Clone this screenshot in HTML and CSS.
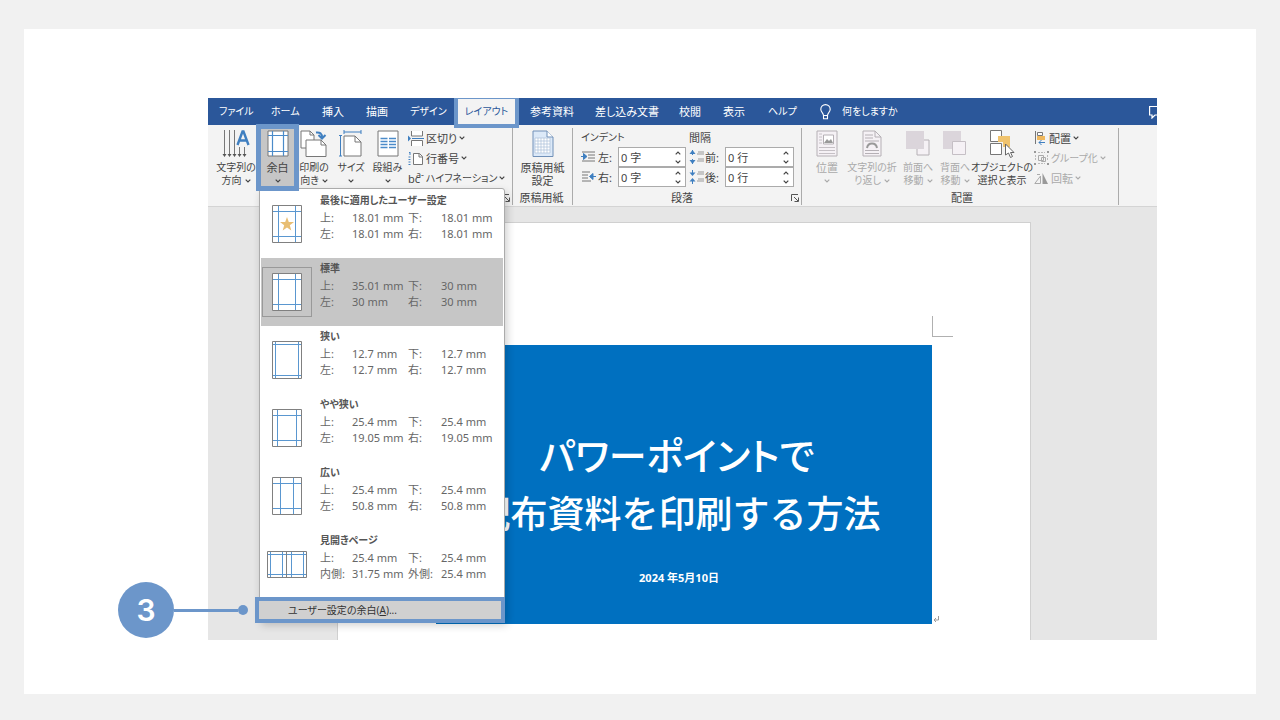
FILE: index.html
```html
<!DOCTYPE html>
<html lang="ja">
<head>
<meta charset="utf-8">
<title>余白の設定</title>
<link rel="stylesheet" href="styles.css">
</head>
<body>
<svg class="defs" aria-hidden="true">
  <symbol id="chev" viewBox="0 0 6 4"><path d="M.7.7 3 3 5.3.7" fill="none" stroke="currentColor" stroke-width="1.2"/></symbol>
  <symbol id="launch" viewBox="0 0 8 8"><path d="M.5 7V.5H7M3 3l4 4M7.500 3.500v4h-4" fill="none" stroke="#555"/></symbol>
</svg>
<main class="slide">
<div class="stage">
<div class="window">
  <nav class="tabs">
    <button class="kana">ファイル</button><button class="kana">ホーム</button><button>挿入</button><button>描画</button><button class="kana">デザイン</button>
    <button class="kana active">レイアウト</button>
    <button class="after">参考資料</button><button>差し込み文書</button><button>校閲</button><button>表示</button><button class="kana">ヘルプ</button>
    <button class="kana tell"><svg width="11" height="16" viewBox="0 0 11 16"><path d="M3.500 11.500C3.500 9 .8 8.200.8 5.300a4.700 4.700 0 0 1 9.400 0c0 2.900-2.700 3.700-2.700 6.200zM3.500 12v2.800h4V12" fill="none" stroke="#fff" stroke-width="1.100"/></svg>何をしますか</button>
    <button class="comment" aria-label="コメント"><svg width="14" height="14" viewBox="0 0 14 14"><path d="M.6 1.500h13v8.500H6L3 13v-3H.6z" fill="none" stroke="#fff" stroke-width="1.200"/></svg></button>
  </nav>
  <div class="ribbon">
    <section class="group setup">
      <div class="tools">
        <button class="big kana"><svg width="28" height="28" viewBox="0 0 28 28"><path d="M2.500 0v26M7.500 0v26M12.500 0v26M17.500 17v9M22.500 17v9" stroke="#777" fill="none"/><path d="M.5 24l2 3 2-3zM5.500 24l2 3 2-3zM10.500 24l2 3 2-3zM15.500 24l2 3 2-3zM20.500 24l2 3 2-3z" fill="#555"/><path d="M15.500 15l5-13.500h1l5 13.500M17.500 10.500h7" fill="none" stroke="#3f7fc0" stroke-width="2.400"/></svg><span>文字列の</span><span>方向 <svg class="c"><use href="#chev"/></svg></span></button>
        <div class="anchor">
          <button class="big pressed"><svg width="22" height="27" viewBox="0 0 22 27"><path d="M1 1h20v25H1z" fill="#fff" stroke="#777"/><path d="M5.500 1v25M16.500 1v25M1 5.500h20M1 21.500h20" stroke="#4b8bc9" stroke-width="1.200"/></svg><span>余白</span><span><svg class="c"><use href="#chev"/></svg></span></button>
          <div class="menu" role="menu">
            <button class="preset" role="menuitem"><span class="thumb"><svg width="30" height="38" viewBox="0 0 30 38"><path class="sheet" d="M.5.500h29v37H.5z"/><path class="guide" d="M6.500 1v36M23.500 1v36M1 6.500h28M1 31.500h28"/><path d="m15 12 1.800 5 5.200.1-4.200 3.200 1.500 5.200-4.300-3-4.300 3 1.500-5.200L8 17.100l5.200-.1z" fill="#e8be73"/></svg></span><strong>最後に適用したユーザー設定</strong><span>上:</span><span>18.01 mm</span><span>下:</span><span>18.01 mm</span><span>左:</span><span>18.01 mm</span><span>右:</span><span>18.01 mm</span></button>
            <button class="preset current" role="menuitem"><span class="thumb"><svg width="30" height="38" viewBox="0 0 30 38"><path class="sheet" d="M.5.500h29v37H.5z"/><path class="guide" d="M6.500 1v36M23.500 1v36M1 6.500h28M1 31.500h28"/></svg></span><strong>標準</strong><span>上:</span><span>35.01 mm</span><span>下:</span><span>30 mm</span><span>左:</span><span>30 mm</span><span>右:</span><span>30 mm</span></button>
            <button class="preset" role="menuitem"><span class="thumb"><svg width="30" height="38" viewBox="0 0 30 38"><path class="sheet" d="M.5.500h29v37H.5z"/><path class="guide" d="M3.500 1v36M26.500 1v36M1 3.500h28M1 34.500h28"/></svg></span><strong>狭い</strong><span>上:</span><span>12.7 mm</span><span>下:</span><span>12.7 mm</span><span>左:</span><span>12.7 mm</span><span>右:</span><span>12.7 mm</span></button>
            <button class="preset" role="menuitem"><span class="thumb"><svg width="30" height="38" viewBox="0 0 30 38"><path class="sheet" d="M.5.500h29v37H.5z"/><path class="guide" d="M5.500 1v36M24.500 1v36M1 6.500h28M1 31.500h28"/></svg></span><strong>やや狭い</strong><span>上:</span><span>25.4 mm</span><span>下:</span><span>25.4 mm</span><span>左:</span><span>19.05 mm</span><span>右:</span><span>19.05 mm</span></button>
            <button class="preset" role="menuitem"><span class="thumb"><svg width="30" height="38" viewBox="0 0 30 38"><path class="sheet" d="M.5.500h29v37H.5z"/><path class="guide" d="M8.500 1v36M21.500 1v36M1 6.500h28M1 31.500h28"/></svg></span><strong>広い</strong><span>上:</span><span>25.4 mm</span><span>下:</span><span>25.4 mm</span><span>左:</span><span>50.8 mm</span><span>右:</span><span>50.8 mm</span></button>
            <button class="preset" role="menuitem"><span class="thumb"><svg width="40" height="27" viewBox="0 0 40 27"><path class="sheet" d="M.5.500h39v26H.5z"/><path class="guide" d="M3.500 1v25M15.500 1v25M24.500 1v25M36.500 1v25M1 3.500h38M1 23.500h38"/><path class="sheet" d="M19.500 .5v26"/></svg></span><strong>見開きページ</strong><span>上:</span><span>25.4 mm</span><span>下:</span><span>25.4 mm</span><span>内側:</span><span>31.75 mm</span><span>外側:</span><span>25.4 mm</span></button>
            <button class="custom kana" role="menuitem">ユーザー設定の余白(<u>A</u>)...</button>
          </div>
        </div>
        <button class="big kana"><svg width="28" height="28" viewBox="0 0 28 28"><path d="M1 1h9l4 4v13H1z" fill="#fff" stroke="#777"/><path d="M10 1v4h4" fill="none" stroke="#777"/><path d="M6 10h15l5 5v11.500H6z" fill="#fff" stroke="#777"/><path d="M21 10v5h5" fill="none" stroke="#777"/><path d="M16 2.500c4-.5 6 1 6 5" fill="none" stroke="#3f7fc0" stroke-width="2"/><path d="m18.500 5 3.500 3.500L25.500 5" fill="none" stroke="#3f7fc0" stroke-width="2"/></svg><span>印刷の</span><span>向き <svg class="c"><use href="#chev"/></svg></span></button>
        <button class="big kana"><svg width="24" height="28" viewBox="0 0 24 28"><path d="M5 6h11l6 6v14H5z" fill="#fff" stroke="#777"/><path d="M16 6v6h6" fill="none" stroke="#777"/><path d="M5 2h17M5 0v4M22 0v4M1.500 6v20M0 5.500h3M0 26h3" stroke="#3f7fc0"/></svg><span>サイズ</span><span><svg class="c"><use href="#chev"/></svg></span></button>
        <button class="big kana"><svg width="22" height="28" viewBox="0 0 22 28"><path d="M1 1h20v25H1z" fill="#fff" stroke="#777"/><path d="M3.500 8.500h7M3.500 11.500h7M3.500 14.500h7M3.500 17.500h7M12 8.500h7M12 11.500h7M12 14.500h7M12 17.500h7" stroke="#4b8bc9" stroke-width="1.300"/></svg><span>段組み</span><span><svg class="c"><use href="#chev"/></svg></span></button>
        <div class="stack">
          <button><svg width="16" height="15" viewBox="0 0 16 15"><path d="M3.500 0v5h11V0M3.500 15V9.500h11V15" fill="#fff" stroke="#777"/><path d="M4 7.500h12" stroke="#3f7fc0"/><path d="m0 4.500 3 3-3 3z" fill="#3f7fc0"/></svg>区切り <svg class="c"><use href="#chev"/></svg></button>
          <button><svg width="16" height="15" viewBox="0 0 16 15"><path d="M5.500 2.500h6l3 3v8h-9zM11 2.500v3.500h3.500" fill="#fff" stroke="#777"/><path d="M2 1v3M1 1.500h1M.5 6h2M.5 8.500h2M.5 11h2M.5 13.500h2" stroke="#3f7fc0"/></svg>行番号 <svg class="c"><use href="#chev"/></svg></button>
          <button class="kana"><span class="bca">bc<sup>a-</sup></span>ハイフネーション <svg class="c"><use href="#chev"/></svg></button>
        </div>
      </div>
      <div class="caption"><span></span><svg width="8" height="8"><use href="#launch"/></svg></div>
    </section>
    <section class="group manuscript">
      <div class="tools"><button class="big"><svg width="22" height="28" viewBox="0 0 22 28"><path d="M1 1h14l6 6v19.500H1z" fill="#dce9f8" stroke="#7090b8"/><path d="M15 1v6h6" fill="#fff" stroke="#7090b8"/><path d="M3 8h15v15H3zM3 11h15M3 14h15M3 17h15M3 20h15M6 8v15M9 8v15M12 8v15M15 8v15" fill="#fff" stroke="#a9bed9" stroke-width=".7"/></svg><span>原稿用紙</span><span>設定</span></button></div>
      <div class="caption"><span>原稿用紙</span></div>
    </section>
    <section class="group paragraph">
      <div class="fields">
        <h3 class="kana">インデント</h3><h3>間隔</h3>
        <svg width="15" height="12" viewBox="0 0 15 12"><path d="M1 1h13M7 4h7M7 7h7M1 10h13" stroke="#777"/><path d="M0 5.500h3M2.500 2.500l3.500 3-3.500 3z" stroke="#3f7fc0" fill="#3f7fc0"/></svg>
        <label for="il">左:</label><div class="spin"><input id="il" value="0 字"><span><button aria-label="増"><svg class="c up"><use href="#chev"/></svg></button><button aria-label="減"><svg class="c"><use href="#chev"/></svg></button></span></div>
        <svg width="15" height="14" viewBox="0 0 15 14"><path d="M3.500 0v5M3.500 9v5" stroke="#3f7fc0"/><path d="M.5 4 3.500 0l3 4zM.5 10l3 4 3-4z" fill="#3f7fc0"/><path d="M9 2h6M8 4h7M9 9h6M8 11h7" stroke="#999"/></svg>
        <label for="sb">前:</label><div class="spin"><input id="sb" value="0 行"><span><button aria-label="増"><svg class="c up"><use href="#chev"/></svg></button><button aria-label="減"><svg class="c"><use href="#chev"/></svg></button></span></div>
        <svg width="15" height="12" viewBox="0 0 15 12"><path d="M1 1h8M1 4h6M1 7h6M1 10h9" stroke="#777"/><path d="M15 5.500h-4M12 2.500l-3.500 3 3.500 3z" stroke="#3f7fc0" fill="#3f7fc0"/></svg>
        <label for="ir">右:</label><div class="spin"><input id="ir" value="0 字"><span><button aria-label="増"><svg class="c up"><use href="#chev"/></svg></button><button aria-label="減"><svg class="c"><use href="#chev"/></svg></button></span></div>
        <svg width="15" height="14" viewBox="0 0 15 14"><path d="M3.500 0v5M3.500 9v5" stroke="#3f7fc0"/><path d="M.5 2.500l3 3.500 3-3.500zM.5 11.500l3-3.500 3 3.500z" fill="#3f7fc0"/><path d="M9 2h6M8 4h7M9 9h6M8 11h7" stroke="#999"/></svg>
        <label for="sa">後:</label><div class="spin"><input id="sa" value="0 行"><span><button aria-label="増"><svg class="c up"><use href="#chev"/></svg></button><button aria-label="減"><svg class="c"><use href="#chev"/></svg></button></span></div>
      </div>
      <div class="caption"><span>段落</span><svg width="8" height="8"><use href="#launch"/></svg></div>
    </section>
    <section class="group arrange">
      <div class="tools">
        <button class="big off"><svg width="22" height="28" viewBox="0 0 22 28"><path d="M1 1h20v25H1z" fill="#f5f1f5" stroke="#b5b0b5"/><path d="M3 4h3M3 7h3M3 10h3M3 13h3M3 17.500h16M3 20.500h16M3 23.500h16" stroke="#c5c0c5"/><path d="M7.500 5h10v9h-10z" fill="#fff" stroke="#b5b0b5"/><path d="m8 13 3-4 2 2 2-2 2 4z" fill="#999"/></svg><span>位置</span><span><svg class="c"><use href="#chev"/></svg></span></button>
        <button class="big kana off"><svg width="20" height="28" viewBox="0 0 20 28"><path d="M1 1h12l6 6v19H1z" fill="#f5f1f5" stroke="#b5b0b5"/><path d="M13 1v6h6M3 5h8M3 8h8M3 11h14M3 20.500h14M3 23.500h14" fill="none" stroke="#b5b0b5"/><path d="M5 18c1-6 9-6 10 0" fill="none" stroke="#999" stroke-width="2"/></svg><span>文字列の折</span><span>り返し <svg class="c"><use href="#chev"/></svg></span></button>
        <button class="big kana off"><svg width="24" height="28" viewBox="0 0 24 28"><path d="M11 10h12v15H11z" fill="#f5f1f5" stroke="#b5b0b5"/><path d="M0 1h18v18H0z" fill="#dbd5db"/></svg><span>前面へ</span><span>移動 <svg class="c"><use href="#chev"/></svg></span></button>
        <button class="big kana off"><svg width="24" height="28" viewBox="0 0 24 28"><path d="M0 1h18v18H0z" fill="#dbd5db"/><path d="M9.500 11.500h13v13h-13z" fill="#f5f1f5" stroke="#c5bfc5"/></svg><span>背面へ</span><span>移動 <svg class="c"><use href="#chev"/></svg></span></button>
        <button class="big kana"><svg width="26" height="28" viewBox="0 0 26 28"><path d="M1.500.500h11v11h-11zM1.500 13.500h11v11h-11z" fill="#fff" stroke="#777"/><path d="M9 6h12v11h-7v-5H9z" fill="#f0c36d"/><path d="M16.500 14v11l3-2 2 4.500 2-1-2-4h3.500z" fill="#fff" stroke="#666"/></svg><span>オブジェクトの</span><span>選択と表示</span></button>
        <div class="stack">
          <button><svg width="13" height="14" viewBox="0 0 13 14"><path d="M1.500 0v13" stroke="#777"/><path d="M3.500 1.500h5v3h-5z" fill="#fff" stroke="#777"/><path d="M3 5h8v4H3z" fill="#f0b85d"/><path d="M5 11.500h6M7.500 9 5 11.500 7.500 14" fill="none" stroke="#3f7fc0"/></svg>配置 <svg class="c"><use href="#chev"/></svg></button>
          <button class="kana off"><svg width="15" height="14" viewBox="0 0 15 14"><path d="M4 1.500h7M4 12.500h7M1.500 4v6M13.500 4v6" stroke="#bbb" stroke-dasharray="2 1"/><path d="M4.500 4.500h5v5h-5zM7.500 6.500h4v4h-4z" fill="none" stroke="#aaa"/><path d="M0 0h2v2H0zM13 0h2v2h-2zM0 12h2v2H0zM13 12h2v2h-2z" fill="#999"/></svg>グループ化 <svg class="c"><use href="#chev"/></svg></button>
          <button class="off"><svg width="15" height="13" viewBox="0 0 15 13"><path d="M.8 11.500h5.700V4zM3 2.500h3" fill="none" stroke="#aaa"/><path d="M8.500 1v11H14z" fill="#999"/></svg>回転 <svg class="c"><use href="#chev"/></svg></button>
        </div>
      </div>
      <div class="caption"><span>配置</span></div>
    </section>
  </div>
  <div class="document">
    <article class="page">
      <div class="cover">
        <span class="corner"></span>
        <h1><span class="first">パワーポイントで</span><br>配布資料を印刷する方法</h1>
        <time datetime="2024-05-10">2024 年5月10日</time>
        <svg class="mark" width="6" height="7" viewBox="0 0 6 7"><path d="M5.500 0v4H1M3 2 1 4l2 2" fill="none" stroke="#999"/></svg>
      </div>
    </article>
  </div>
</div>
<div class="callout"><span class="num">3</span><span class="line"></span><span class="dot"></span></div>
</div>
</main>
</body>
</html>
```

FILE: styles.css
```css
* { box-sizing: border-box; }
body {
  margin: 0;
  min-height: 100vh;
  display: flex;
  padding: 29px 24px 26px;
  background: #f1f1f1;
  font: 11px/13px "Noto Sans", "Noto Sans CJK JP", sans-serif;
  color: #444;
}
button { font: inherit; color: inherit; border: 0; padding: 0; background: none; white-space: nowrap; text-align: left; }
.defs { position: absolute; width: 0; height: 0; }
.slide { flex: 1; display: flex; padding: 69px 99px 54px 184px; background: #fff; }
.stage { flex: 1; display: flex; position: relative; min-width: 0; }
.window { flex: 1; min-width: 0; display: flex; flex-direction: column; overflow: hidden; font-feature-settings: "palt"; }
.kana { font-size: 10px; }
.c { width: 6px; height: 4px; flex: none; }
.up { transform: scaleY(-1); }

/* tab strip */
.tabs {
  display: grid;
  grid-template-columns: 52px 51px 44px 44px 47px 59px 79px 84px 44px 45px 52px 1fr 8px;
  height: 27px;
  padding-left: 11px;
  background: #2b579a;
  color: #fff;
}
.tabs .active {
  z-index: 1;
  background: #f3f3f3;
  color: #2b579a;
  text-align: center;
  outline: 4px solid #6c96ca;
  outline-offset: -1px;
}
.tabs .after { padding-left: 14px; }
.tell { display: flex; align-items: center; gap: 11px; }
.comment { overflow: hidden; display: flex; align-items: center; }
.comment svg { flex: none; }

/* ribbon */
.ribbon { display: flex; height: 82px; padding: 3px 0 1px; background: #f3f3f3; border-bottom: 1px solid #d4d4d4; }
.group { display: flex; flex-direction: column; justify-content: space-between; border-right: 1px solid #ababab; }
.setup { width: 305px; padding-left: 4px; }
.manuscript { width: 60px; }
.paragraph { width: 229px; }
.arrange { width: 317px; padding-left: 6px; }
.tools { display: grid; }
.setup .tools { grid-template-columns: 48px 35px 38px 36px 37px 1fr; }
.arrange .tools { grid-template-columns: 38px 52px 40px 34px 60px 1fr; }
.big { display: flex; flex-direction: column; align-items: center; width: 100%; padding-top: 2px; }
.big > svg { margin-bottom: 3px; flex: none; }
.big span { display: flex; align-items: center; gap: 3px; height: 13px; }
.off { color: #aaa; }
.anchor { position: relative; z-index: 3; }
.pressed { position: relative; z-index: 2; background: #c6c6c6; outline: 5px solid #6c96ca; outline-offset: -1px; }
.pressed > svg { margin-bottom: 4px; }
.stack { display: grid; grid-auto-rows: 20px; padding-left: 2px; }
.stack button { display: flex; align-items: center; gap: 2px; }
.bca { font-size: 11px; }
.bca sup { font-size: 9px; line-height: 0; margin-left: -4px; }
.caption { display: grid; grid-template-columns: 1fr auto; align-items: center; padding-right: 2px; text-align: center; height: 15px; }
.fields {
  display: grid;
  grid-template-columns: 17px 20px 68px 3px 16px 20px 69px;
  grid-template-rows: 19px 20px 20px;
  align-items: center;
  padding-left: 8px;
}
.fields h3 { margin: 0; font-weight: 400; grid-column: 1 / 4; }
.fields h3:not(.kana) { font-size: 11px; grid-column: 5 / 8; }
.fields .spin + svg { grid-column: 5; }
.fields .spin:nth-of-type(even) + svg { grid-column: 1; }
.spin { display: flex; height: 20px; background: #fff; border: 1px solid #ababab; }
.spin input { flex: 1; min-width: 0; border: 0; padding: 0 2px; background: none; font: inherit; color: inherit; }
.spin > span { display: flex; flex-direction: column; justify-content: space-around; width: 12px; }
.spin button { display: flex; justify-content: center; padding-right: 2px; }

/* margins menu */
.menu {
  position: absolute;
  top: 60px;
  left: -1px;
  z-index: 1;
  width: 246px;
  padding: 1px;
  background: #fff;
  border: 1px solid #ababab;
  border-radius: 3px 3px 0 0;
  box-shadow: 2px 4px 8px #0003;
  line-height: 17px;
  color: #666;
}
.preset {
  display: grid;
  grid-template-columns: 59px 32px 56px 33px 1fr;
  grid-template-rows: 17px 16px 17px;
  width: 100%;
  height: 68px;
  padding-top: 2px;
}
.preset strong { grid-column: 2 / 6; font-size: 10px; color: #555; }
.preset span { height: 17px; }
.preset .thumb { grid-row: 1 / 4; width: 50px; height: 50px; margin: 7px 0 0 1px; display: flex; align-items: center; justify-content: center; }
.current { background: #c6c6c6; }
.current .thumb { border: 1px solid #999; }
.sheet { fill: #fff; stroke: #808080; }
.guide { fill: none; stroke: #5a97d0; }
.custom {
  width: 100%;
  height: 18px;
  margin: 3px 0 0 -2px;
  padding-left: 29px;
  background: #d0d0d0;
  outline: 4px solid #6c96ca;
  color: #333;
}

/* document */
.document { flex: 1; min-height: 0; display: flex; padding: 15px 126px 0 129px; background: #e6e6e6; }
.page { flex: 1; padding: 122px 98px 0; background: #fff; border: 1px solid #d0d0d0; border-bottom: 0; }
.cover { position: relative; height: 279px; padding: 79px 14px 0 0; background: #0070c0; color: #fff; text-align: center; }
.cover h1 { display: flex; flex-direction: column; align-items: center; margin: 0; font: 500 37px/59px "Noto Sans CJK JP", sans-serif; font-feature-settings: normal; white-space: nowrap; }
.cover h1 br { display: none; }
.first { font-size: 38px; font-feature-settings: "palt"; }
.cover time { display: block; margin: 28px -4px 0 0; font-weight: 700; line-height: 16px; }
.corner { position: absolute; left: 100%; bottom: calc(100% + 8px); width: 21px; height: 21px; border: solid #b0b0b0; border-width: 0 0 1px 1px; }
.mark { position: absolute; left: calc(100% + 1px); bottom: 1px; }

/* step callout */
.callout { position: absolute; left: -90px; top: 484px; display: flex; align-items: center; }
.num {
  width: 56px;
  height: 56px;
  border-radius: 50%;
  background: #6c96ca;
  color: #fff;
  font: 600 30px/56px Inter, sans-serif;
  text-align: center;
}
.line { width: 64px; height: 3px; background: #6c96ca; }
.dot { width: 10px; height: 10px; border-radius: 50%; background: #6c96ca; }
```
